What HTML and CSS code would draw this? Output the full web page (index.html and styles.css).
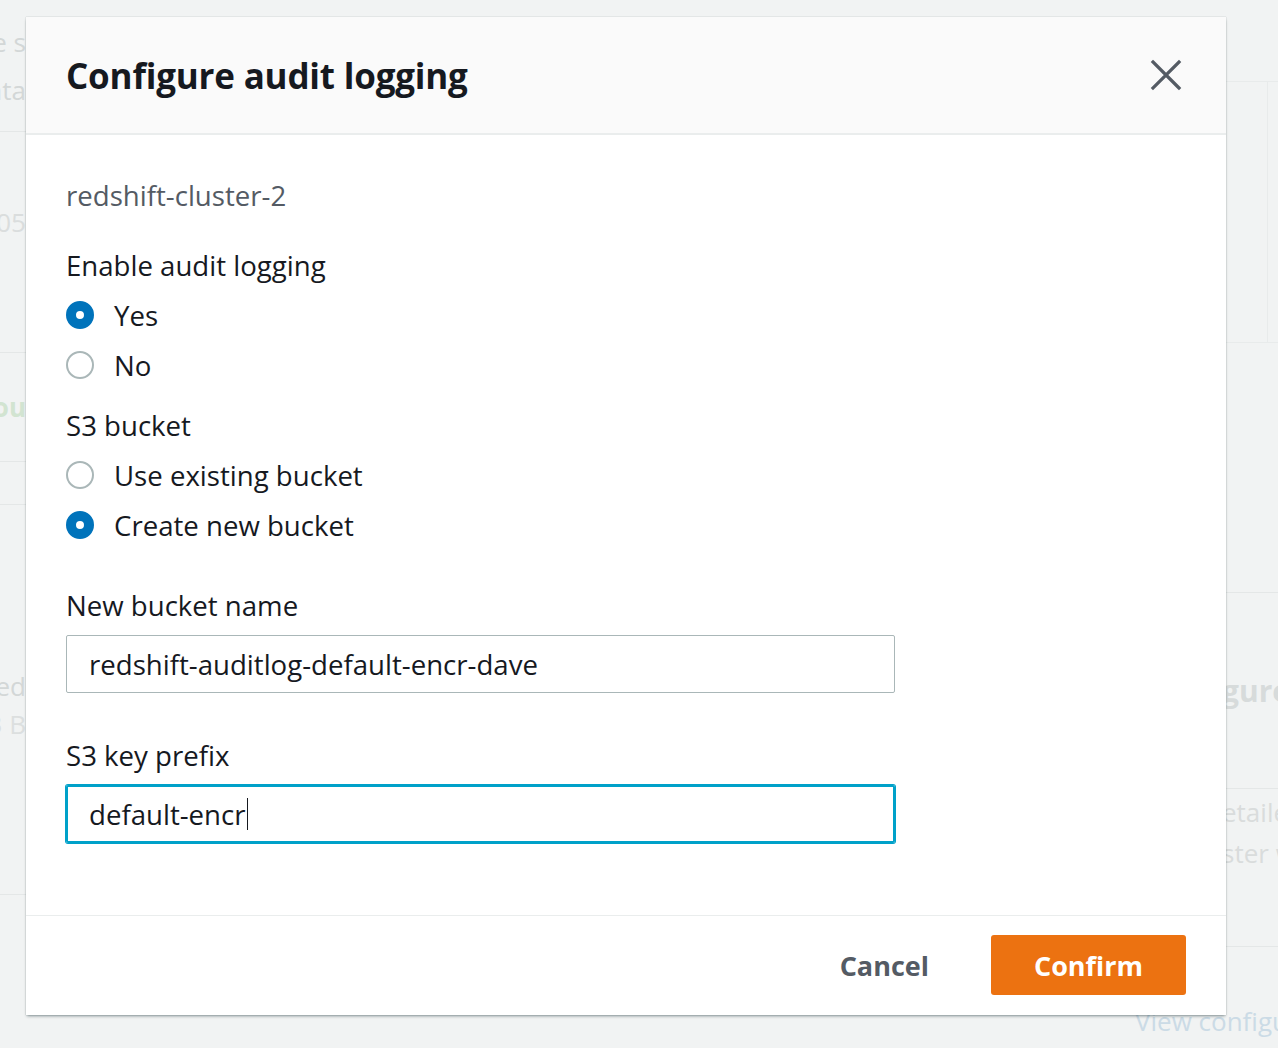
FILE: index.html
```html
<!DOCTYPE html>
<html lang="en">
<head>
<meta charset="utf-8">
<title>Configure audit logging</title>
<link rel="stylesheet" href="styles.css">
</head>
<body>
<div class="page">
  <div class="edge edge-left">
    <div class="bg-row r1"><span>Use s</span></div>
    <div class="bg-row r2 line-b"><span>data</span></div>
    <div class="bg-row r3"><span>2019-05</span></div>
    <div class="bg-row r4 line-t line-b"><span class="green">Available ou</span></div>
    <div class="bg-row r5 line-t"><span>Not configured</span></div>
    <div class="bg-row r6"><span>S3 B</span></div>
    <div class="bg-row r7 line-t"></div>
  </div>
  <div class="center">
    <div class="center-fill"></div>
    <div class="center-link">View configuration</div>
  </div>
  <div class="edge edge-right">
    <div class="rb rb1"></div>
    <div class="rb rb2"></div>
    <div class="rb rb3"></div>
    <div class="rb rb4 line-t"><span class="bold">gure</span></div>
    <div class="rb rb5 line-t"><span>etailed</span></div>
    <div class="rb rb6"><span>ster wi</span></div>
    <div class="rb rb7 line-t"></div>
  </div>
</div>

<div class="modal" role="dialog" aria-labelledby="m-title">
  <header class="modal-header">
    <h1 id="m-title" class="modal-title">Configure audit logging</h1>
    <button class="close" aria-label="Close">
      <svg width="40" height="40" viewBox="0 0 40 40"><path d="M7 7 L33 33 M33 7 L7 33" stroke="#545b64" stroke-width="3.2" stroke-linecap="square" fill="none"/></svg>
    </button>
  </header>
  <div class="modal-body">
    <div class="cluster">redshift-cluster-2</div>

    <div class="field-label gap-a">Enable audit logging</div>
    <div class="radios r-first">
      <label class="radio"><span class="dot on"></span><span>Yes</span></label>
      <label class="radio"><span class="dot"></span><span>No</span></label>
    </div>

    <div class="field-label gap-b">S3 bucket</div>
    <div class="radios r-second">
      <label class="radio"><span class="dot"></span><span>Use existing bucket</span></label>
      <label class="radio"><span class="dot on"></span><span>Create new bucket</span></label>
    </div>

    <div class="field-label gap-c">New bucket name</div>
    <div class="input">redshift-auditlog-default-encr-dave</div>

    <div class="field-label gap-d">S3 key prefix</div>
    <div class="input focused">default-encr<span class="caret"></span></div>
  </div>
  <footer class="modal-footer">
    <button class="btn-link">Cancel</button>
    <button class="btn-primary">Confirm</button>
  </footer>
</div>
</body>
</html>
```

FILE: styles.css
```css
* { box-sizing: border-box; }
html, body { margin: 0; padding: 0; }
body {
  width: 1278px;
  height: 1048px;
  overflow: hidden;
  background: #f1f3f3;
  font-family: "Open Sans", "Noto Sans", "Liberation Sans", sans-serif;
  position: relative;
}

/* ---------- dimmed page behind the dialog ---------- */
.page {
  display: grid;
  grid-template-columns: 26px 1200px 52px;
  height: 1048px;
  color: #d3d7d7;
  font-size: 26px;
}
.edge { overflow: hidden; display: flex; flex-direction: column; }
.bg-row { display: flex; justify-content: flex-end; white-space: nowrap; align-items: center; }
.line-t { border-top: 1px solid #e4e7e7; }
.line-b { border-bottom: 1px solid #e4e7e7; }
.r1 { height: 40px; margin-top: 22px; }
.r2 { height: 70px; align-items: flex-start; padding-top: 10px; }
.r3 { height: 220px; align-items: flex-start; padding-top: 72px; color: #dadddd; }
.r4 { height: 110px; }
.r4 .green { color: #d2e4d1; font-weight: 700; }
.r5 { height: 200px; align-items: flex-end; margin-top: 42px; }
.r6 { height: 40px; align-items: center; color: #dcdfdf; }
.r7 { margin-top: 150px; }

.center { display: flex; flex-direction: column; overflow: visible; }
.center-fill { flex: 1; }
.center-link {
  height: 50px;
  padding-left: 1109px;
  color: #cbdbe6;
  white-space: nowrap;
  line-height: 46px;
  width: 1252px;
  overflow: hidden;
}

.rb { white-space: nowrap; display: flex; align-items: center; margin-left: -4px; }
.rb1 { height: 82px; border-bottom: 1px solid #e8ebeb; }
.rb2 { height: 260px; border-right: 1px solid #e8ebeb; margin-right: 10px; }
.rb3 { height: 250px; border-top: 1px solid #e8ebeb; }
.rb4 { height: 196px; color: #d7dbdb; font-weight: 700; font-size: 30px; }
.rb5 { height: 42px; align-items: flex-end; color: #d9dcdc; }
.rb6 { height: 46px; color: #d9dcdc; }
.rb7 { margin-top: 70px; }

/* ---------- dialog ---------- */
.modal {
  position: absolute;
  left: 26px;
  top: 17px;
  width: 1200px;
  background: #fff;
  box-shadow: 0 2px 3px -1px rgba(0, 28, 36, 0.45), 0 0 1px rgba(0, 28, 36, 0.3);
  color: #16191f;
}
.modal-header {
  height: 118px;
  background: #fafafa;
  border-bottom: 2px solid #eaeded;
  display: flex;
  align-items: center;
  justify-content: space-between;
  padding: 0 40px;
}
.modal-title {
  margin: 0;
  font-size: 35px;
  font-weight: 700;
  line-height: 44px;
  letter-spacing: -0.2px;
  padding-top: 2px;
}
.close {
  border: 0;
  background: none;
  padding: 0;
  width: 40px;
  height: 40px;
  display: flex;
}

.modal-body {
  padding: 42px 40px 72px 40px;
  font-size: 27.6px;
}
.cluster {
  line-height: 36px;
  color: #545b64;
}
.field-label { line-height: 36px; color: #16191f; }
.gap-a { margin-top: 34px; }
.gap-b { margin-top: 17px; }
.gap-c { margin-top: 37px; }
.gap-d { margin-top: 44px; }
.r-first, .r-second { margin-top: 7px; }
.radios { display: flex; flex-direction: column; }
.radio {
  height: 50px;
  display: flex;
  align-items: center;
  gap: 20px;
  color: #16191f;
}
.dot {
  width: 28px;
  height: 28px;
  border-radius: 50%;
  border: 2px solid #aab7b8;
  background: #fff;
  flex: none;
}
.dot.on { border: 10px solid #0073bb; }

.input {
  margin-top: 12px;
  width: 829px;
  height: 58px;
  border: 1px solid #aab7b8;
  border-radius: 2px;
  padding-left: 22px;
  display: flex;
  align-items: center;
  color: #16191f;
  white-space: nowrap;
}
.input.focused {
  border: 2px solid #00a1c9;
  box-shadow: 0 0 0 1px #00a1c9;
  padding-left: 21px;
}
.caret {
  display: inline-block;
  width: 0;
  height: 32px;
  border-left: 1.5px solid #16191f;
  margin-left: 1px;
}

.modal-footer {
  border-top: 1px solid #eaeded;
  padding: 19px 40px 20px;
  display: flex;
  justify-content: flex-end;
  align-items: center;
}
.btn-link {
  border: 0;
  background: none;
  font: inherit;
  font-size: 27px;
  font-weight: 700;
  color: #545b64;
  padding: 0 62px 0 40px;
  height: 60px;
}
.btn-primary {
  border: 0;
  font: inherit;
  font-size: 27px;
  font-weight: 700;
  color: #fff;
  background: #ec7211;
  border-radius: 3px;
  height: 60px;
  width: 195px;
}
```
